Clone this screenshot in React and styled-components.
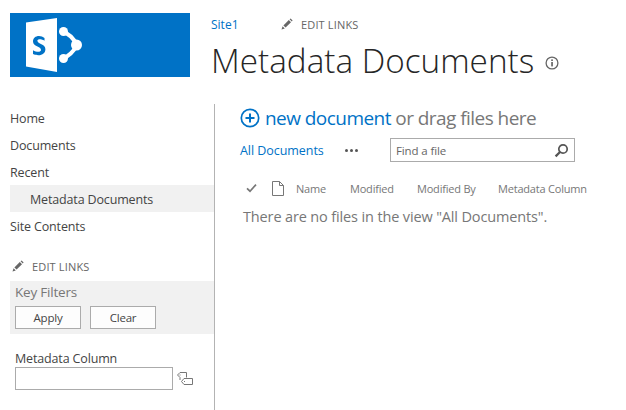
import styled, { createGlobalStyle } from "styled-components";

const Global = createGlobalStyle`
  html, body {
    margin: 0;
    background: #fff;
    overflow: hidden;
  }
  body {
    font-family: "Open Sans", "Noto Sans", "Liberation Sans", sans-serif;
    color: #444;
  }
`;

const Page = styled.div`
  width: 626px;
  height: 410px;
  overflow: hidden;
`;

const Header = styled.header`
  display: flex;
  padding: 13px 0 0 10px;
  height: 104px;
  box-sizing: border-box;
`;

const Logo = styled.div`
  width: 180px;
  height: 64px;
  background: #0072c6;
  svg {
    display: block;
  }
`;

const TitleBlock = styled.div`
  margin-left: 21px;
`;

const Crumbs = styled.div`
  display: flex;
  align-items: center;
  height: 24px;
  margin-top: -1px;
`;

const SiteLink = styled.a`
  font-size: 12px;
  color: #0072c6;
  width: 70px;
`;

const EditLinks = styled.span`
  display: inline-flex;
  align-items: center;
  font-size: 11px;
  letter-spacing: 0.15px;
  color: #666;
  gap: 8px;
`;

const Title = styled.h1`
  display: flex;
  align-items: center;
  margin: 1px 0 0;
  font-size: 33.3px;
  line-height: 46px;
  font-weight: 300;
  color: #262626;
  svg {
    margin: 6px 0 0 11px;
  }
`;

const Body = styled.div`
  display: flex;
`;

const Sidebar = styled.aside`
  width: 204px;
  margin-left: 10px;
  height: 306px;
  border-right: 1px solid #b3b3b3;
`;

const NavItem = styled.div`
  height: 27px;
  line-height: 29px;
  font-size: 12.5px;
  letter-spacing: -0.15px;
  color: #444;
  padding-left: ${(p) => (p.$sub ? "20px" : "0")};
  background: ${(p) => (p.$active ? "#f1f1f1" : "transparent")};
`;

const SideEdit = styled(EditLinks)`
  margin: 18px 0 0 2px;
  height: 18px;
  display: flex;
`;

const FilterPanel = styled.div`
  margin-top: 6px;
  height: 53px;
  background: #f1f1f1;
  padding: 1px 0 0 5px;
  box-sizing: border-box;
`;

const FilterTitle = styled.div`
  font-size: 13.5px;
  line-height: 20px;
  letter-spacing: -0.2px;
  color: #777;
`;

const Buttons = styled.div`
  display: flex;
  gap: 9px;
  margin-top: 4px;
`;

const Button = styled.button`
  width: 66px;
  height: 23px;
  padding: 0;
  font-family: inherit;
  font-size: 11.5px;
  letter-spacing: -0.2px;
  color: #444;
  background: #fdfdfd;
  border: 1px solid #ababab;
`;

const FieldBlock = styled.div`
  padding: 16px 0 0 5px;
`;

const FieldLabel = styled.div`
  font-size: 12.5px;
  line-height: 17px;
  letter-spacing: -0.15px;
  color: #444;
`;

const FieldRow = styled.div`
  display: flex;
  gap: 4px;
`;

const FieldInput = styled.div`
  width: 156px;
  height: 21px;
  border: 1px solid #ababab;
  background: #fff;
`;

const PickerIcon = styled.span`
  display: block;
  margin-top: 3px;
`;

const Main = styled.main`
  flex: 1;
  padding: 2px 0 0 25px;
`;

const NewDoc = styled.div`
  display: flex;
  align-items: center;
  gap: 5px;
  height: 24px;
  font-size: 19px;
  letter-spacing: -0.55px;
  color: #777;
`;

const Accent = styled.span`
  color: #0072c6;
`;

const ViewBar = styled.div`
  display: flex;
  align-items: center;
  margin-top: 8px;
  height: 24px;
`;

const ViewLink = styled.a`
  font-size: 12.5px;
  letter-spacing: -0.05px;
  color: #0072c6;
  width: 84px;
`;

const Dots = styled.span`
  display: flex;
  gap: 2px;
  margin: 0 32px 0 21px;
  i {
    width: 3px;
    height: 3px;
    border-radius: 50%;
    background: #555;
  }
`;

const Search = styled.div`
  display: flex;
  align-items: center;
  justify-content: space-between;
  width: 185px;
  height: 24px;
  box-sizing: border-box;
  border: 1px solid #ababab;
  padding: 0 5px;
  font-size: 11.5px;
  letter-spacing: -0.12px;
  color: #666;
`;

const Columns = styled.div`
  display: flex;
  align-items: center;
  height: 22px;
  margin-top: 15px;
  font-size: 11px;
  letter-spacing: -0.2px;
  color: #777;
`;

const CheckCell = styled.span`
  display: flex;
  width: 32px;
  padding-left: 6px;
  box-sizing: border-box;
`;

const DocCell = styled.span`
  display: flex;
  width: 24px;
`;

const ColName = styled.span`
  width: ${(p) => p.$w}px;
`;

const Empty = styled.div`
  margin: 8px 0 0 3px;
  font-size: 14.5px;
  line-height: 19px;
  letter-spacing: -0.14px;
  color: #777;
`;

const Pencil = () => (
  <svg width="12" height="12" viewBox="0 0 12 12">
    <path d="M0.5 11.5 L1.6 8.2 L3.8 10.4 Z M2.4 7.4 L7.8 2 L10 4.2 L4.6 9.6 Z M8.6 1.2 L9.6 0.4 L11.6 2.4 L10.8 3.4 Z" fill="#666" />
  </svg>
);

const SpLogo = () => (
  <svg width="180" height="64" viewBox="0 0 180 64">
    <path d="M16 9.5 L47 5 V59 L16 53.5 Z" fill="#fff" />
    <path
      d="M34.5 25 C33 23.8 31 23 29 23 C25.5 23 23 25.2 23 28.4 C23 33.8 31 33 31 37 C31 39.4 26.5 39.4 23 37.2 V41 C24.6 41.8 26.6 42.2 28.4 42.2 C32.6 42.2 35.4 39.8 35.4 36.2 C35.4 30.8 27.4 31.2 27.4 27.8 C27.4 25.8 31.5 25.8 34.5 27.8 Z"
      fill="#0072c6"
    />
    <path d="M53 19 Q61 21 67 32 Q61 43 53 45" fill="none" stroke="#fff" strokeWidth="4" />
    <circle cx="53.5" cy="18.5" r="4.5" fill="#fff" />
    <circle cx="53.5" cy="45.5" r="4.5" fill="#fff" />
    <circle cx="66.5" cy="32" r="5.5" fill="#fff" />
  </svg>
);

const InfoIcon = () => (
  <svg width="14" height="14" viewBox="0 0 14 14">
    <circle cx="7" cy="7" r="5.9" fill="none" stroke="#666" strokeWidth="1.3" />
    <rect x="6.2" y="6" width="1.7" height="4.4" fill="#666" />
    <rect x="6.2" y="3.4" width="1.7" height="1.6" fill="#666" />
  </svg>
);

const PlusIcon = () => (
  <svg width="20" height="20" viewBox="0 0 20 20">
    <circle cx="10" cy="10" r="8.7" fill="none" stroke="#0072c6" strokeWidth="1.7" />
    <path d="M10 5.5 V14.5 M5.5 10 H14.5" stroke="#0072c6" strokeWidth="2" />
  </svg>
);

const SearchIcon = () => (
  <svg width="15" height="15" viewBox="0 0 15 15">
    <circle cx="9" cy="6" r="4.2" fill="none" stroke="#555" strokeWidth="1.7" />
    <path d="M6 9 L1.6 13.4" stroke="#555" strokeWidth="2.2" />
  </svg>
);

const CheckIcon = () => (
  <svg width="11" height="10" viewBox="0 0 11 10">
    <path d="M1 5.4 L4 8.2 L10 1.6" fill="none" stroke="#777" strokeWidth="1.7" />
  </svg>
);

const DocIcon = () => (
  <svg width="12" height="15" viewBox="0 0 12 15">
    <path d="M0.5 0.5 H7.5 L11.5 4.5 V14.5 H0.5 Z M7.5 0.5 V4.5 H11.5" fill="#fff" stroke="#777" />
  </svg>
);

const TagsIcon = () => (
  <svg width="17" height="15" viewBox="0 0 17 15">
    <path d="M9.5 5.5 V0.5 H3 L0.5 3 L3 5.5 V8" fill="none" stroke="#777" />
    <path d="M15.5 6.5 H7 L4.5 9.5 L7 12.5 H15.5 Z" fill="#fff" stroke="#777" />
    <rect x="2.5" y="2.5" width="1" height="1" fill="#777" />
    <rect x="7" y="9" width="1" height="1" fill="#777" />
  </svg>
);

const App = () => {
  return (
    <Page>
      <Global />
      <Header>
        <Logo>
          <SpLogo />
        </Logo>
        <TitleBlock>
          <Crumbs>
            <SiteLink>Site1</SiteLink>
            <EditLinks>
              <Pencil />
              EDIT LINKS
            </EditLinks>
          </Crumbs>
          <Title>
            Metadata Documents
            <InfoIcon />
          </Title>
        </TitleBlock>
      </Header>
      <Body>
        <Sidebar>
          <nav>
            <NavItem>Home</NavItem>
            <NavItem>Documents</NavItem>
            <NavItem>Recent</NavItem>
            <NavItem $sub $active>
              Metadata Documents
            </NavItem>
            <NavItem>Site Contents</NavItem>
          </nav>
          <SideEdit>
            <Pencil />
            EDIT LINKS
          </SideEdit>
          <FilterPanel>
            <FilterTitle>Key Filters</FilterTitle>
            <Buttons>
              <Button>Apply</Button>
              <Button>Clear</Button>
            </Buttons>
          </FilterPanel>
          <FieldBlock>
            <FieldLabel>Metadata Column</FieldLabel>
            <FieldRow>
              <FieldInput />
              <PickerIcon>
                <TagsIcon />
              </PickerIcon>
            </FieldRow>
          </FieldBlock>
        </Sidebar>
        <Main>
          <NewDoc>
            <PlusIcon />
            <span>
              <Accent>new document</Accent> or drag files here
            </span>
          </NewDoc>
          <ViewBar>
            <ViewLink>All Documents</ViewLink>
            <Dots>
              <i />
              <i />
              <i />
            </Dots>
            <Search>
              Find a file
              <SearchIcon />
            </Search>
          </ViewBar>
          <Columns>
            <CheckCell>
              <CheckIcon />
            </CheckCell>
            <DocCell>
              <DocIcon />
            </DocCell>
            <ColName $w={54}>Name</ColName>
            <ColName $w={67}>Modified</ColName>
            <ColName $w={81}>Modified By</ColName>
            <ColName $w={100}>Metadata Column</ColName>
          </Columns>
          <Empty>There are no files in the view "All Documents".</Empty>
        </Main>
      </Body>
    </Page>
  );
};

export default App;
